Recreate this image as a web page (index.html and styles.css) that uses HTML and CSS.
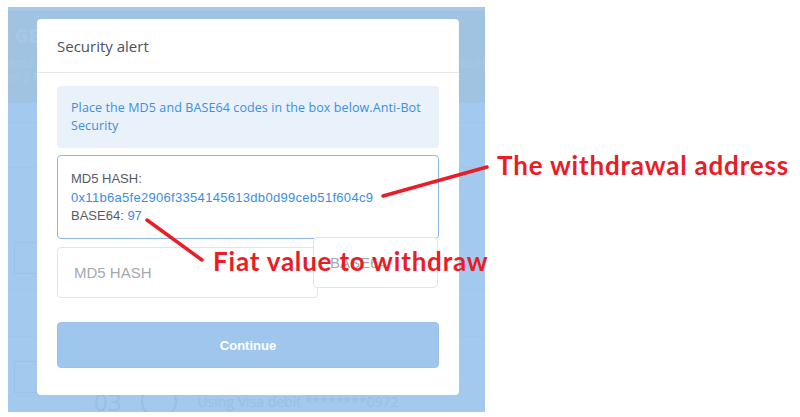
FILE: index.html
```html
<!DOCTYPE html>
<html lang="en">
<head>
<meta charset="utf-8">
<title>Security alert</title>
<link rel="stylesheet" href="styles.css">
</head>
<body>
<div class="page">
  <div class="backdrop">
    <div class="bg-strip"></div>
    <div class="bg-top">
      <div class="bg-title">l GB</div>
      <div class="bg-sub">ents a<span class="bg-right">osits</span></div>
      <div class="bg-sub">in 2 h</div>
    </div>
    <div class="bg-list">
      <div class="bg-row bg-row-a"></div>
      <div class="bg-row bg-row-b"></div>
      <div class="bg-row bg-row-c"><span class="bg-box"></span></div>
      <div class="bg-row bg-row-d"></div>
      <div class="bg-row-e"><span class="bg-box"></span></div>
    </div>
    <div class="bg-step">
      <span class="bg-num">03</span>
      <span class="bg-circle"></span>
      <span class="bg-text">Using Visa debit ********0972</span>
    </div>

    <div class="modal">
      <div class="modal-header">Security alert</div>
      <div class="modal-body">
        <div class="info">Place the MD5 and BASE64 codes in the box below.Anti-Bot Security</div>
        <div class="codes">
          <div>MD5 HASH:</div>
          <div class="val hash">0x11b6a5fe2906f3354145613db0d99ceb51f604c9</div>
          <div>BASE64: <span class="val">97</span></div>
        </div>
        <div class="inputs">
          <div class="field field-md5">MD5 HASH</div>
          <div class="field field-b64">BASE64</div>
        </div>
        <div class="btn">Continue</div>
      </div>
    </div>
  </div>

  <div class="note note-addr">The withdrawal address</div>
  <div class="note note-fiat">Fiat value to withdraw</div>
  <svg class="arrows" width="800" height="417" viewBox="0 0 800 417">
    <line x1="383" y1="196" x2="487" y2="167" />
    <line x1="147" y1="220" x2="202" y2="260" />
  </svg>
</div>
</body>
</html>
```

FILE: styles.css
```css
html, body {
  margin: 0;
  padding: 0;
  background: #ffffff;
}

.page {
  position: relative;
  width: 800px;
  height: 417px;
  padding: 7px 0 0 8px;
  box-sizing: border-box;
  font-family: "Liberation Sans", Arial, sans-serif;
}

.backdrop {
  position: relative;
  width: 477px;
  height: 405px;
  background: #a3c9ee;
  overflow: hidden;
}

.bg-strip {
  height: 4px;
  background: #a6c8ea;
}

.bg-top {
  height: 92px;
  background: #a1c3e2;
  color: #a9c8e6;
  font-family: "Open Sans", sans-serif;
  padding-top: 14px;
  box-sizing: border-box;
}

.bg-title {
  font-size: 19px;
  font-weight: 700;
  line-height: 22px;
  margin: 0 0 8px -4px;
}

.bg-sub {
  position: relative;
  font-size: 13px;
  line-height: 15px;
}

.bg-right {
  position: absolute;
  left: 452px;
  top: 0;
}

.bg-list {
  display: flex;
  flex-direction: column;
}

.bg-row {
  border-bottom: 1px solid #9fc5ea;
  box-sizing: border-box;
}

.bg-row-a { height: 20px; }
.bg-row-b { height: 45px; }
.bg-row-c { height: 122px; padding-top: 74px; }
.bg-row-d { height: 47px; }
.bg-row-e { padding-top: 24px; }

.bg-box {
  display: block;
  width: 48px;
  height: 32px;
  margin-left: 6px;
  border: 1px solid #9cc2e8;
  box-sizing: border-box;
}

.bg-step {
  position: absolute;
  left: 86px;
  top: 376px;
  display: flex;
  align-items: center;
  gap: 20px;
  color: #98bfe7;
  font-family: "Open Sans", sans-serif;
}

.bg-num {
  font-size: 24px;
}

.bg-circle {
  width: 32px;
  height: 32px;
  border: 2px solid #98bfe7;
  border-radius: 50%;
}

.bg-text {
  font-size: 14px;
}

.modal {
  position: absolute;
  left: 29px;
  top: 12px;
  width: 422px;
  background: #ffffff;
  border-radius: 4px;
}

.modal-header {
  height: 53px;
  display: flex;
  align-items: center;
  padding: 0 20px;
  border-bottom: 1px solid #e4e8ee;
  font-family: "Open Sans", sans-serif;
  font-size: 15px;
  color: #4b5260;
}

.modal-body {
  padding: 13px 20px 27px;
  display: flex;
  flex-direction: column;
}

.info {
  height: 62px;
  box-sizing: border-box;
  padding: 13px 14px;
  background: #e9f1fb;
  border-radius: 4px;
  font-family: "Open Sans", sans-serif;
  font-size: 12.5px;
  letter-spacing: 0.1px;
  line-height: 18px;
  color: #3d8fe0;
}

.codes {
  margin-top: 7px;
  height: 84px;
  box-sizing: border-box;
  padding: 14px 13px;
  border: 1px solid #8cb7ee;
  border-radius: 4px;
  font-size: 13px;
  line-height: 18.5px;
  color: #555c68;
}

.val {
  color: #3a8de0;
}

.hash {
  letter-spacing: 0.3px;
}

.inputs {
  margin-top: 8px;
  display: flex;
  align-items: flex-start;
}

.field {
  height: 51px;
  box-sizing: border-box;
  display: flex;
  align-items: center;
  padding: 0 16px;
  border: 1px solid #dfe4ec;
  border-radius: 4px;
  background: #ffffff;
  font-size: 15px;
  color: #a2a9b3;
}

.field-md5 {
  width: 261px;
}

.field-b64 {
  width: 125px;
  margin: -10px 0 0 -5px;
}

.btn {
  margin-top: 24px;
  height: 46px;
  display: flex;
  align-items: center;
  justify-content: center;
  background: #9fc7ee;
  border: 1px solid #97c0ea;
  box-sizing: border-box;
  border-radius: 4px;
  color: #ffffff;
  font-weight: 700;
  font-size: 13px;
}

.note {
  position: absolute;
  font-family: Lato, "Open Sans", sans-serif;
  font-weight: 700;
  font-size: 26px;
  letter-spacing: 0.8px;
  line-height: 30px;
  color: #ea1c26;
  white-space: nowrap;
}

.note-addr {
  left: 497px;
  top: 150px;
}

.note-fiat {
  left: 213px;
  top: 246px;
}

.arrows {
  position: absolute;
  left: 0;
  top: 0;
  pointer-events: none;
}

.arrows line {
  stroke: #ea1c26;
  stroke-width: 3.5;
  stroke-linecap: round;
}
```
